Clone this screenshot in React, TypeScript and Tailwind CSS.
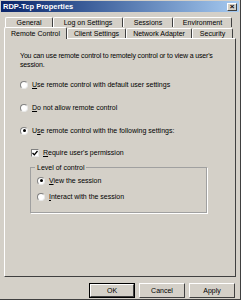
import React from "react";

function Radio({ checked }: { checked?: boolean }) {
  return (
    <span className="flex h-[8px] w-[8px] shrink-0 items-center justify-center rounded-full border border-b-[#e8e8e8] border-l-[#808080] border-r-[#e8e8e8] border-t-[#808080] bg-white">
      {checked && <span className="h-[3px] w-[3px] rounded-full bg-black" />}
    </span>
  );
}

function Check() {
  return (
    <span className="flex h-[8px] w-[8px] shrink-0 items-center justify-center border border-b-[#e8e8e8] border-l-[#808080] border-r-[#e8e8e8] border-t-[#808080] bg-white">
      <svg width="6" height="6" viewBox="0 0 6 6">
        <path d="M0.5 3 L2.3 4.8 L5.5 1" stroke="black" strokeWidth="1.3" fill="none" />
      </svg>
    </span>
  );
}

function Tab({ label, w, selected }: { label: string; w: number; selected?: boolean }) {
  return (
    <div
      style={{ width: w }}
      className={
        "flex items-center justify-center border-l border-t border-r border-l-white border-t-white border-r-[#404040] rounded-t-[2px] bg-[#d4d0c8] " +
        (selected ? "h-[12px] -mb-[1px] relative z-10" : "h-[10px]")
      }
    >
      <span className="whitespace-nowrap">{label}</span>
    </div>
  );
}

export default function App() {
  return (
    <div className="font-['Liberation_Sans',Arial,sans-serif] text-[7px] leading-[9px] text-black">
      <div className="flex h-[300px] w-[241px] flex-col border-b border-r border-b-[#404040] border-r-[#404040] bg-[#d4d0c8]">
        <div className="mx-[1px] mt-[1px] flex h-[11px] items-center justify-between bg-gradient-to-r from-[#0a246a] to-[#a6caf0] px-[2px]">
          <span className="text-[7.5px] font-bold text-white">RDP-Tcp Properties</span>
          <span className="flex h-[8px] w-[10px] items-center justify-center border border-b-[#404040] border-l-white border-r-[#404040] border-t-white bg-[#d4d0c8] text-[8px] font-bold leading-none">
            ×
          </span>
        </div>

        <div className="ml-[4px] mr-[4px] mt-[5px] flex flex-col">
          <div className="ml-[1px] flex">
            <Tab label="General" w={48} />
            <Tab label="Log on Settings" w={70} />
            <Tab label="Sessions" w={50} />
            <Tab label="Environment" w={59} />
          </div>
          <div className="flex items-end">
            <Tab label="Remote Control" w={63} selected />
            <Tab label="Client Settings" w={59} />
            <Tab label="Network Adapter" w={66} />
            <Tab label="Security" w={41} />
          </div>
          <div className="flex h-[239px] flex-col border border-b-[#404040] border-l-white border-r-[#404040] border-t-white px-[15px] pt-[12px]">
            <p className="tracking-[-0.15px]">You can use remote control to remotely control or to view a user's session.</p>
            <label className="mt-[11px] flex items-center gap-[4px]">
              <Radio />
              <span><span className="underline">U</span>se remote control with default user settings</span>
            </label>
            <label className="mt-[14px] flex items-center gap-[4px]">
              <Radio />
              <span><span className="underline">D</span>o not allow remote control</span>
            </label>
            <label className="mt-[14px] flex items-center gap-[4px]">
              <Radio checked />
              <span>U<span className="underline">s</span>e remote control with the following settings:</span>
            </label>
            <label className="ml-[11px] mt-[13px] flex items-center gap-[4px]">
              <Check />
              <span><span className="underline">R</span>equire user's permission</span>
            </label>
            <fieldset className="ml-[10px] mr-[13px] mt-[6px] border border-[#a0a0a0] px-[6px] pb-[11px] shadow-[1px_1px_0_#ffffff]">
              <legend className="ml-[-2px] px-[2px]">Level of control</legend>
              <label className="mt-[4px] flex items-center gap-[4px]">
                <Radio checked />
                <span><span className="underline">V</span>iew the session</span>
              </label>
              <label className="mt-[7px] flex items-center gap-[4px]">
                <Radio />
                <span><span className="underline">I</span>nteract with the session</span>
              </label>
            </fieldset>
          </div>
        </div>

        <div className="mr-[5px] mt-[6px] flex justify-end gap-[4px]">
          <button className="flex h-[15px] w-[46px] items-center justify-center border border-black">
            <span className="flex h-full w-full items-center justify-center border border-b-[#404040] border-l-white border-r-[#404040] border-t-white">OK</span>
          </button>
          <button className="flex h-[15px] w-[46px] items-center justify-center border border-b-[#404040] border-l-white border-r-[#404040] border-t-white">
            Cancel
          </button>
          <button className="flex h-[15px] w-[46px] items-center justify-center border border-b-[#404040] border-l-white border-r-[#404040] border-t-white">
            Apply
          </button>
        </div>
      </div>
    </div>
  );
}
